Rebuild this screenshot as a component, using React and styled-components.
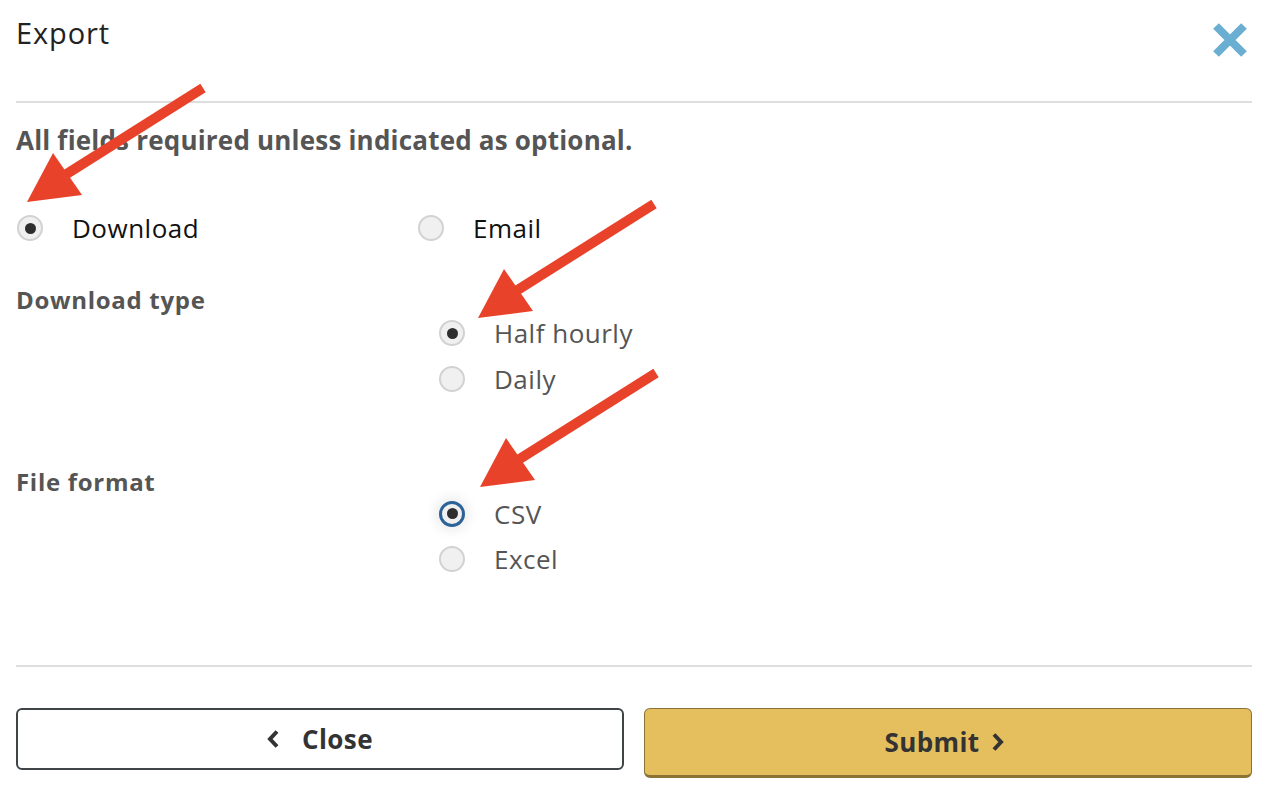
import { useState } from "react";
import styled, { createGlobalStyle } from "styled-components";

const GlobalStyle = createGlobalStyle`
    body {
        margin: 0;
        background: #fff;
        font-family: "Open Sans", "Liberation Sans", sans-serif;
    }
`

const FONT = `"Open Sans", "Liberation Sans", sans-serif`

export default function App() {

    const [delivery, setDelivery] = useState('download')
    const [type, setType] = useState('half')
    const [format, setFormat] = useState('csv')

    return (
        <Page>
            <GlobalStyle />
            <Header>
                <Title>Export</Title>
                <CloseX aria-label="close">
                    <svg width="36" height="36" viewBox="0 0 36 36">
                        <path d="M4 4 L32 32 M32 4 L4 32" stroke="#6aafd2" strokeWidth="8" />
                    </svg>
                </CloseX>
            </Header>
            <Divider />

            <Required>All fields required unless indicated as optional.</Required>

            <DeliveryRow>
                <Choice onClick={() => setDelivery('download')}>
                    <Radio $checked={delivery === 'download'} />
                    <ChoiceText $dark>Download</ChoiceText>
                </Choice>
                <Choice onClick={() => setDelivery('email')}>
                    <Radio $checked={delivery === 'email'} />
                    <ChoiceText $dark>Email</ChoiceText>
                </Choice>
            </DeliveryRow>

            <Field $top="40px" $offset="33px">
                <FieldLabel>Download type</FieldLabel>
                <Options>
                    <Choice onClick={() => setType('half')}>
                        <Radio $checked={type === 'half'} />
                        <ChoiceText>Half hourly</ChoiceText>
                    </Choice>
                    <Choice onClick={() => setType('daily')}>
                        <Radio $checked={type === 'daily'} />
                        <ChoiceText>Daily</ChoiceText>
                    </Choice>
                </Options>
            </Field>

            <Field $top="71px" $offset="32px">
                <FieldLabel>File format</FieldLabel>
                <Options>
                    <Choice onClick={() => setFormat('csv')}>
                        <Radio $checked={format === 'csv'} $focus />
                        <ChoiceText>CSV</ChoiceText>
                    </Choice>
                    <Choice onClick={() => setFormat('excel')}>
                        <Radio $checked={format === 'excel'} />
                        <ChoiceText>Excel</ChoiceText>
                    </Choice>
                </Options>
            </Field>

            <Divider $bottom />

            <Buttons>
                <CloseBtn>
                    <svg width="16" height="22" viewBox="0 0 16 22">
                        <path d="M12 3.5 L5 11 L12 18.5" fill="none" stroke="#333" strokeWidth="4" />
                    </svg>
                    Close
                </CloseBtn>
                <SubmitBtn>
                    Submit
                    <svg width="16" height="22" viewBox="0 0 16 22">
                        <path d="M4 3.5 L11 11 L4 18.5" fill="none" stroke="#333" strokeWidth="4" />
                    </svg>
                </SubmitBtn>
            </Buttons>

            {/* annotation arrows over the form */}
            <Arrows width="1274" height="796" viewBox="0 0 1274 796">
                {[[27, 202], [478, 318], [480, 487]].map(([x, y], idx) => (
                    <g key={idx} transform={`translate(${x} ${y})`}>
                        <path d="M176 -114 L38 -27" stroke="#e8432a" strokeWidth="10" />
                        <path d="M0 0 L26 -49 L55 -7 Z" fill="#e8432a" />
                    </g>
                ))}
            </Arrows>
        </Page>
    )
}

const Page = styled.div`
    position: relative;
    width: 1274px;
    height: 796px;
    box-sizing: border-box;
    padding: 0 22px 0 16px;
    font-family: ${FONT};
    overflow: hidden;
`

const Header = styled.div`
    display: flex;
    justify-content: space-between;
    align-items: flex-start;
    height: 101px;
`

const Title = styled.h2`
    margin: 13px 0 0;
    font-size: 29px;
    font-weight: 400;
    letter-spacing: 0.9px;
    color: #222;
    line-height: 40px;
`

const CloseX = styled.button`
    border: 0;
    background: none;
    padding: 0;
    margin: 22px 4px 0 0;
    cursor: pointer;
    svg{ display: block; }
`

const Divider = styled.hr`
    margin: 0;
    border: 0;
    height: 2px;
    background: #dedede;
    margin-top: ${p => p.$bottom ? '90px' : '0'};
`

const Required = styled.p`
    margin: 19px 0 0;
    font-size: 26px;
    font-weight: 700;
    letter-spacing: 0.2px;
    color: #555;
    line-height: 36px;
`

const DeliveryRow = styled.div`
    display: grid;
    grid-template-columns: 401px 1fr;
    margin-top: 54px;
    padding-left: 1px;
`

const Choice = styled.label`
    display: flex;
    align-items: center;
    gap: 29px;
    height: 32px;
    cursor: pointer;
`

const Radio = styled.span`
    position: relative;
    flex: none;
    width: 26px;
    height: 26px;
    box-sizing: border-box;
    border-radius: 50%;
    background: #f0f0f0;
    border: ${p => p.$focus ? '3px solid #2b6398' : '2px solid #d2d2d2'};
    box-shadow: ${p => p.$focus ? '0 0 12px 4px rgba(0,0,0,.08)' : 'none'};

    &::after{
        content: "";
        display: ${p => p.$checked ? 'block' : 'none'};
        position: absolute;
        left: 50%;
        top: 50%;
        width: 11px;
        height: 11px;
        margin: -5.5px 0 0 -5.5px;
        border-radius: 50%;
        background: #2e2e2e;
    }
`

const ChoiceText = styled.span`
    font-size: 26px;
    letter-spacing: 0.5px;
    color: ${p => p.$dark ? '#111' : '#555'};
`

const Field = styled.div`
    display: grid;
    grid-template-columns: 423px 1fr;
    margin-top: ${p => p.$top};

    & > div:last-child{
        margin-top: ${p => p.$offset};
    }
`

const FieldLabel = styled.div`
    font-size: 24px;
    font-weight: 700;
    letter-spacing: 0.7px;
    color: #555;
    line-height: 32px;
`

const Options = styled.div`
    display: flex;
    flex-direction: column;
    gap: 13.5px;
`

const Buttons = styled.div`
    display: grid;
    grid-template-columns: 1fr 1fr;
    gap: 20px;
    margin-top: 41px;
    align-items: start;
`

const BaseBtn = styled.button`
    display: flex;
    align-items: center;
    justify-content: center;
    box-sizing: border-box;
    border-radius: 6px;
    font-family: ${FONT};
    font-size: 26px;
    font-weight: 700;
    letter-spacing: 0.4px;
    color: #333;
    cursor: pointer;
    svg{ display: block; }
`

const CloseBtn = styled(BaseBtn)`
    height: 62px;
    gap: 21px;
    background: #fff;
    border: 2px solid #3f4446;
    padding-left: 4px;
`

const SubmitBtn = styled(BaseBtn)`
    height: 70px;
    gap: 10px;
    background: #e5bf5d;
    border: 1.5px solid #8a7335;
    border-bottom-width: 3px;
    padding-right: 12px;
`

const Arrows = styled.svg`
    position: absolute;
    left: 0;
    top: 0;
    pointer-events: none;
`
